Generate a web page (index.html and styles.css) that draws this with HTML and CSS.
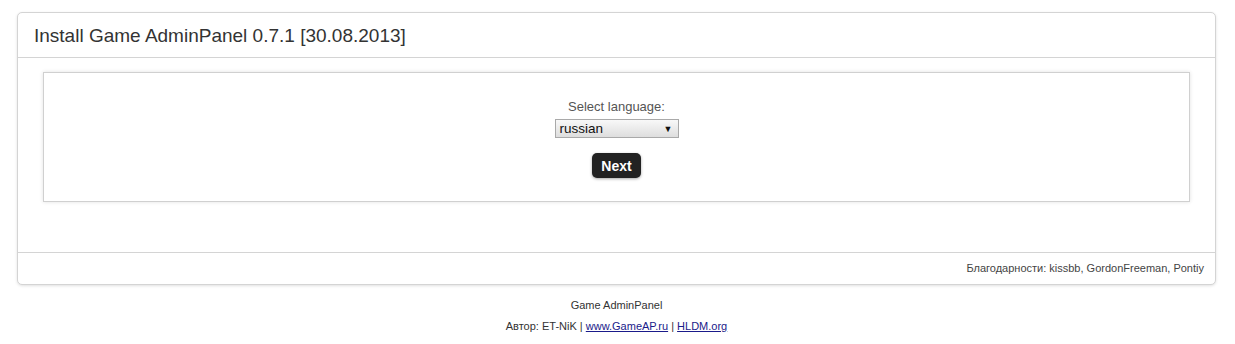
FILE: index.html
```html
<!DOCTYPE html>
<html>
<head>
<meta charset="utf-8">
<title>Install Game AdminPanel</title>
<link rel="stylesheet" href="styles.css">
</head>
<body>
<div class="panel">
  <div class="panel-head">Install Game AdminPanel 0.7.1 [30.08.2013]</div>
  <div class="panel-body">
    <div class="box">
      <div class="label">Select language:</div>
      <div class="select"><span>russian</span><span class="arrow">▼</span></div>
      <button class="btn">Next</button>
    </div>
  </div>
  <div class="panel-foot">Благодарности: kissbb, GordonFreeman, Pontiy</div>
</div>
<div class="credits">
  <div class="line">Game AdminPanel</div>
  <div class="line">Автор: ET-NiK | <a href="#">www.GameAP.ru</a> | <a href="#">HLDM.org</a></div>
</div>
</body>
</html>
```

FILE: styles.css
```css
html, body {
  margin: 0;
  padding: 0;
  background: #fff;
  font-family: "Liberation Sans", Arial, sans-serif;
  color: #333;
}
body {
  padding: 12px 19px 0 17px;
}
.panel {
  border: 1px solid #d4d4d4;
  border-radius: 5px;
  box-shadow: 0 1px 3px rgba(0,0,0,0.12);
  background: #fff;
}
.panel-head {
  height: 44px;
  line-height: 46px;
  padding: 0 16px;
  font-size: 19px;
  color: #333;
  border-bottom: 1px solid #d4d4d4;
}
.panel-body {
  padding: 14px 25px 50px 25px;
}
.box {
  border: 1px solid #d0d0d0;
  box-shadow: 0 0 4px rgba(0,0,0,0.12);
  height: 130px;
  display: flex;
  flex-direction: column;
  align-items: center;
  box-sizing: border-box;
}
.label {
  margin-top: 26px;
  font-size: 13px;
  color: #555;
  line-height: 16px;
}
.select {
  margin-top: 4px;
  height: 17px;
  border: 1px solid #a9a9a9;
  background: linear-gradient(#f8f8f8, #dedede);
  display: flex;
  align-items: center;
  justify-content: space-between;
  padding: 0 5px 0 4px;
  box-sizing: content-box;
  width: 113px;
  font-size: 13.5px;
  color: #111;
}
.arrow {
  font-size: 9px;
  color: #111;
}
.btn {
  margin-top: 15px;
  background: #222;
  color: #fff;
  border: none;
  border-radius: 5px;
  font-family: "Liberation Sans", Arial, sans-serif;
  font-weight: bold;
  font-size: 14px;
  width: 49px;
  height: 25px;
  padding: 0;
  box-shadow: 0 1px 3px rgba(0,0,0,0.35);
}
.panel-foot {
  height: 31px;
  line-height: 31px;
  border-top: 1px solid #d4d4d4;
  text-align: right;
  padding-right: 11px;
  font-size: 11px;
  color: #444;
}
.credits {
  text-align: center;
  font-size: 11px;
  color: #333;
  padding-top: 10px;
}
.credits .line {
  line-height: 21px;
}
.credits a {
  color: #1a1a8a;
  text-decoration: underline;
}
```
